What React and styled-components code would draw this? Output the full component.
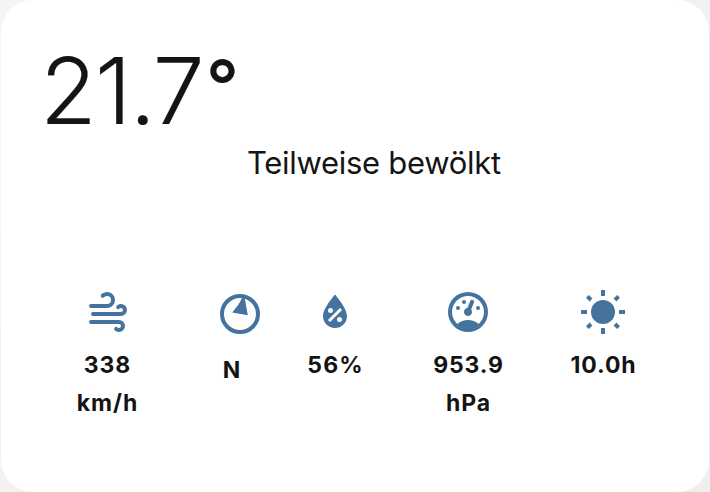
import React from "react";
import styled, { createGlobalStyle } from "styled-components";

const Global = createGlobalStyle`
  body { margin: 0; background: linear-gradient(135deg, #f5f5f5, #efefef); }
  * { box-sizing: border-box; }
`;

const Card = styled.main`
  width: 708px;
  height: 492px;
  margin-left: 1px;
  padding: 42px 40px 0 39px;
  border-radius: 32px;
  background: #fff;
  color: #141414;
  font-family: Inter, sans-serif;
  overflow: hidden;
`;

const Temperature = styled.div`
  display: flex;
  height: 96px;
  line-height: 96px;
  font-size: 92.5px;
  font-weight: 300;
  letter-spacing: -1.7px;
  white-space: nowrap;
  -webkit-text-stroke: 0.2px #141414;
`;

const Degree = styled.span`
  margin: -4px 0 0 3px;
  font-size: 72px;
  font-weight: 500;
  letter-spacing: 0;
`;

const Condition = styled.div`
  height: 50px;
  padding-left: 207px;
  font-size: 31px;
  line-height: 50px;
  letter-spacing: -0.29px;
  white-space: nowrap;
`;

const Metrics = styled.section`
  display: flex;
  margin: 100px 0 0 3px;
`;

const Metric = styled.div`
  display: flex;
  flex-direction: column;
  align-items: center;
  width: ${(p) => p.$width}px;
  padding-top: ${(p) => p.$top || 0}px;
`;

const Icon = styled.svg`
  display: block;
  width: 48px;
  height: 48px;
  fill: #44739e;
`;

const Value = styled.div`
  margin-top: ${(p) => p.$gap ?? 10}px;
  margin-right: ${(p) => p.$shift ?? -1}px;
  font-size: 23px;
  font-weight: 700;
  line-height: 38px;
  letter-spacing: ${(p) => p.$spacing ?? 0.85}px;
  text-align: center;
  white-space: nowrap;
`;

const wind = "M4,10A1,1 0 0,1 3,9A1,1 0 0,1 4,8H12A2,2 0 0,0 14,6A2,2 0 0,0 12,4C11.45,4 10.95,4.22 10.59,4.59C10.2,5 9.56,5 9.17,4.59C8.78,4.2 8.78,3.56 9.17,3.17C9.9,2.45 10.9,2 12,2A4,4 0 0,1 16,6A4,4 0 0,1 12,10H4M19,12A1,1 0 0,0 20,11A1,1 0 0,0 19,10C18.72,10 18.47,10.11 18.29,10.29C17.9,10.68 17.27,10.68 16.88,10.29C16.5,9.9 16.5,9.27 16.88,8.88C17.42,8.34 18.17,8 19,8A3,3 0 0,1 22,11A3,3 0 0,1 19,14H5A1,1 0 0,1 4,13A1,1 0 0,1 5,12H19M18,18H4A1,1 0 0,1 3,17A1,1 0 0,1 4,16H18A3,3 0 0,1 21,19A3,3 0 0,1 18,22C17.17,22 16.42,21.66 15.88,21.12C15.5,20.73 15.5,20.1 15.88,19.71C16.27,19.32 16.9,19.32 17.29,19.71C17.47,19.89 17.72,20 18,20A1,1 0 0,0 19,19A1,1 0 0,0 18,18Z";
const humidity = "M12,3.25C12,3.25 6,10 6,14C6,17.32 8.69,20 12,20A6,6 0 0,0 18,14C18,10 12,3.25 12,3.25M14.47,9.97L15.53,11.03L9.53,17.03L8.47,15.97M9.75,10A1.25,1.25 0 0,1 11,11.25A1.25,1.25 0 0,1 9.75,12.5A1.25,1.25 0 0,1 8.5,11.25A1.25,1.25 0 0,1 9.75,10M14.25,14.5A1.25,1.25 0 0,1 15.5,15.75A1.25,1.25 0 0,1 14.25,17A1.25,1.25 0 0,1 13,15.75A1.25,1.25 0 0,1 14.25,14.5Z";
const gauge = "M12,2A10,10 0 0,0 2,12A10,10 0 0,0 12,22A10,10 0 0,0 22,12A10,10 0 0,0 12,2M12,4A8,8 0 0,1 20,12C20,14.4 19,16.5 17.3,18C15.9,16.7 14,16 12,16C10,16 8.2,16.7 6.7,18C5,16.5 4,14.4 4,12A8,8 0 0,1 12,4M14,5.89C13.62,5.9 13.26,6.15 13.1,6.54L11.81,9.77L11.71,10C11,10.13 10.41,10.6 10.14,11.26C9.73,12.29 10.23,13.45 11.26,13.86C12.29,14.27 13.45,13.77 13.86,12.74C14.12,12.08 14,11.32 13.57,10.76L13.67,10.5L14.96,7.29L14.97,7.26C15.17,6.75 14.92,6.17 14.41,5.96C14.28,5.91 14.15,5.89 14,5.89M10,6A1,1 0 0,0 9,7A1,1 0 0,0 10,8A1,1 0 0,0 11,7A1,1 0 0,0 10,6M7,9A1,1 0 0,0 6,10A1,1 0 0,0 7,11A1,1 0 0,0 8,10A1,1 0 0,0 7,9M17,9A1,1 0 0,0 16,10A1,1 0 0,0 17,11A1,1 0 0,0 18,10A1,1 0 0,0 17,9Z";

const PathIcon = ({ d }) => (
  <Icon viewBox="0 0 24 24"><path d={d} /></Icon>
);

const Compass = () => (
  <Icon viewBox="0 0 48 48">
    <circle cx="24" cy="24" r="18" fill="none" stroke="#44739e" strokeWidth="4" />
    <path d="M26 7H28.6L31.8 25.2L16.2 22.6L22.5 14.5L25.6 9Z" />
  </Icon>
);

const rays = [0, 45, 90, 135, 180, 225, 270, 315];

const Sun = () => (
  <Icon viewBox="0 0 24 24">
    <circle cx="12" cy="12" r="6" />
    {rays.map((a) => (
      <rect
        key={a}
        x="11"
        y={a % 90 ? 1.0 : 1}
        width="2"
        height={a % 90 ? 2.5 : 3}
        transform={`rotate(${a} 12 12)`}
      />
    ))}
  </Icon>
);

export default function App() {
  return (
    <>
      <Global />
      <Card>
        <Temperature>21.7<Degree>°</Degree></Temperature>
        <Condition>Teilweise bewölkt</Condition>
        <Metrics>
          <Metric $width={128}>
            <PathIcon d={wind} />
            <Value $spacing={1}>338<br />km/h</Value>
          </Metric>
          <Metric $width={138} $top={2}>
            <Compass />
            <Value $gap={13} $shift={16}>N</Value>
          </Metric>
          <Metric $width={52}>
            <PathIcon d={humidity} />
            <Value $spacing={1.1}>56%</Value>
          </Metric>
          <Metric $width={214}>
            <PathIcon d={gauge} />
            <Value>953.9<br />hPa</Value>
          </Metric>
          <Metric $width={56}>
            <Sun />
            <Value>10.0h</Value>
          </Metric>
        </Metrics>
      </Card>
    </>
  );
}
